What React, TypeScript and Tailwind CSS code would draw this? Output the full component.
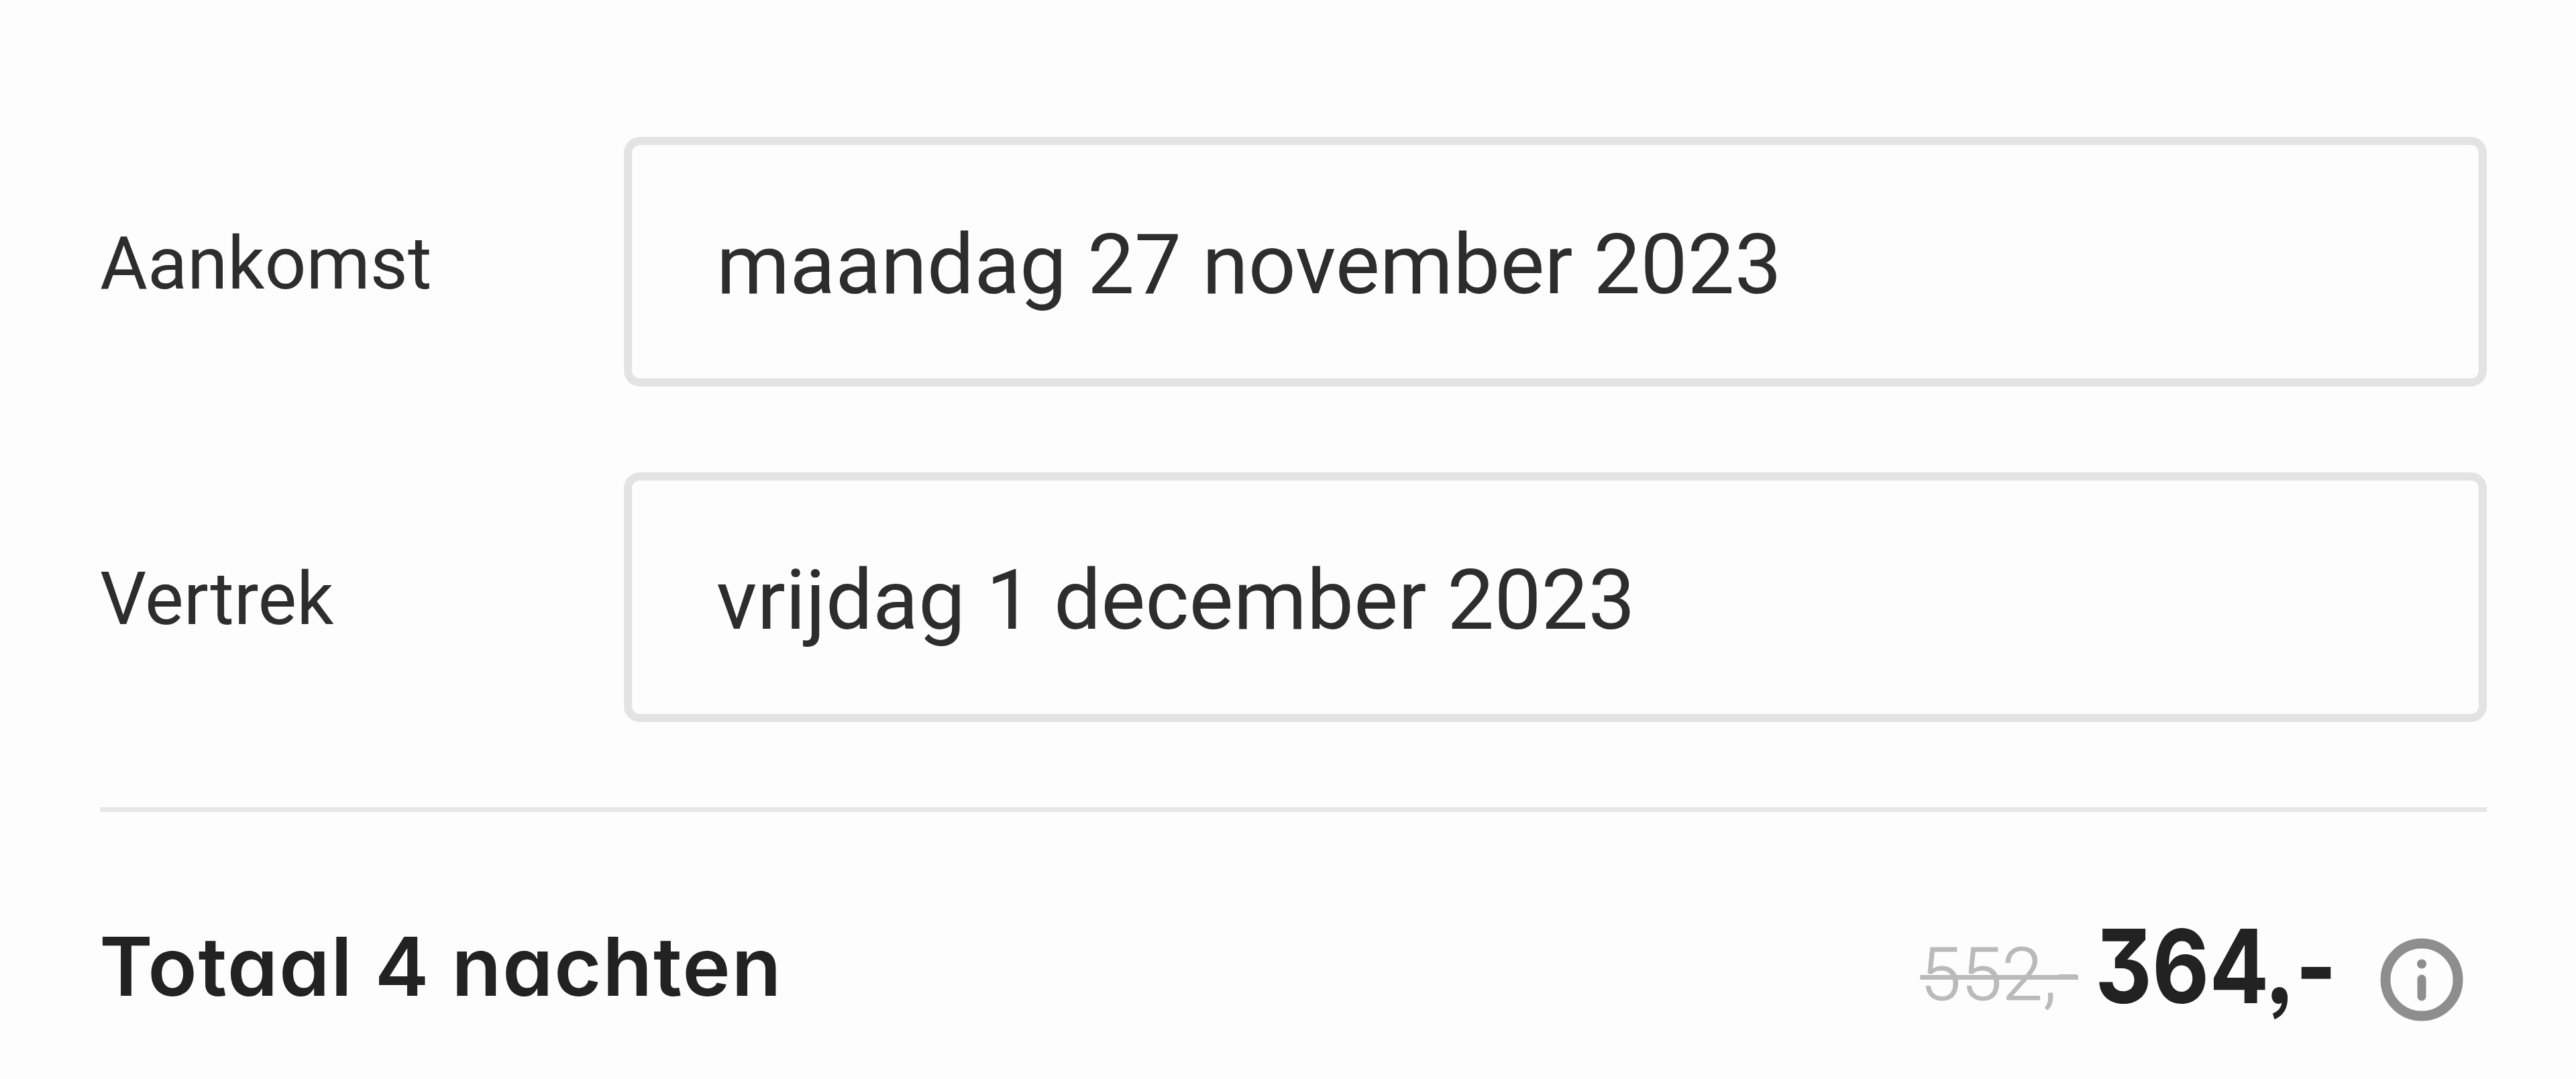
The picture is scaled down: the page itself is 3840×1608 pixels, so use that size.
function Field({ label, value }: { label: string; value: string }) {
  return (
    <div className="flex h-[372px] items-center">
      <div className="w-[781px] shrink-0 pt-[6px] text-[108.8px] leading-none">{label}</div>
      <div className="flex h-full flex-1 items-center rounded-[24px] border-[12px] border-[#e3e3e2] pl-[126px] pt-[9px] text-[124.7px] leading-none">
        {value}
      </div>
    </div>
  );
}

function InfoIcon() {
  return (
    <svg className="size-[124px]" viewBox="0 0 124 124" fill="none">
      <circle cx="62" cy="62" r="54" stroke="#8e8e8e" strokeWidth="15" />
      <circle cx="62" cy="38.5" r="7" fill="#8e8e8e" />
      <path d="M62 61v26" stroke="#8e8e8e" strokeWidth="13" strokeLinecap="round" />
    </svg>
  );
}

export default function App() {
  return (
    <div className="h-[1608px] w-[3840px] overflow-hidden bg-[#fdfdfd] pl-[149px] pr-[133px] pt-[204px] font-['Roboto',sans-serif] text-[#2d2d2d]">
      <div className="flex flex-col gap-[128px]">
        <Field label="Aankomst" value="maandag 27 november 2023" />
        <Field label="Vertrek" value="vrijdag 1 december 2023" />
      </div>
      <div className="mt-[127px] h-[7px] bg-[#e6e6e5]" />
      <div className="mt-[138px] flex h-[220px] items-start whitespace-nowrap leading-none text-[#222222]">
        <div className="-ml-[1px] mt-[32px] font-['Inter',sans-serif] text-[121px] font-semibold tracking-[1.7px] [font-feature-settings:'cv11','cv09','ss03']">
          Totaal 4 nachten
        </div>
        <div className="ml-auto mr-[35px] flex items-start">
          <div className="mt-[50px] text-[110px] font-light text-[#bababa] line-through decoration-[7px] [-webkit-text-stroke:1px_#bababa]">
            552,-
          </div>
          <div className="ml-[25px] mt-[16px] w-[425px] font-['Inter',sans-serif] text-[152px] font-bold">
            <span className="inline-block origin-left scale-x-[0.865] [font-feature-settings:'cv11','cv09','ss03']">364,-</span>
          </div>
          <div className="mt-[50px]">
            <InfoIcon />
          </div>
        </div>
      </div>
    </div>
  );
}
